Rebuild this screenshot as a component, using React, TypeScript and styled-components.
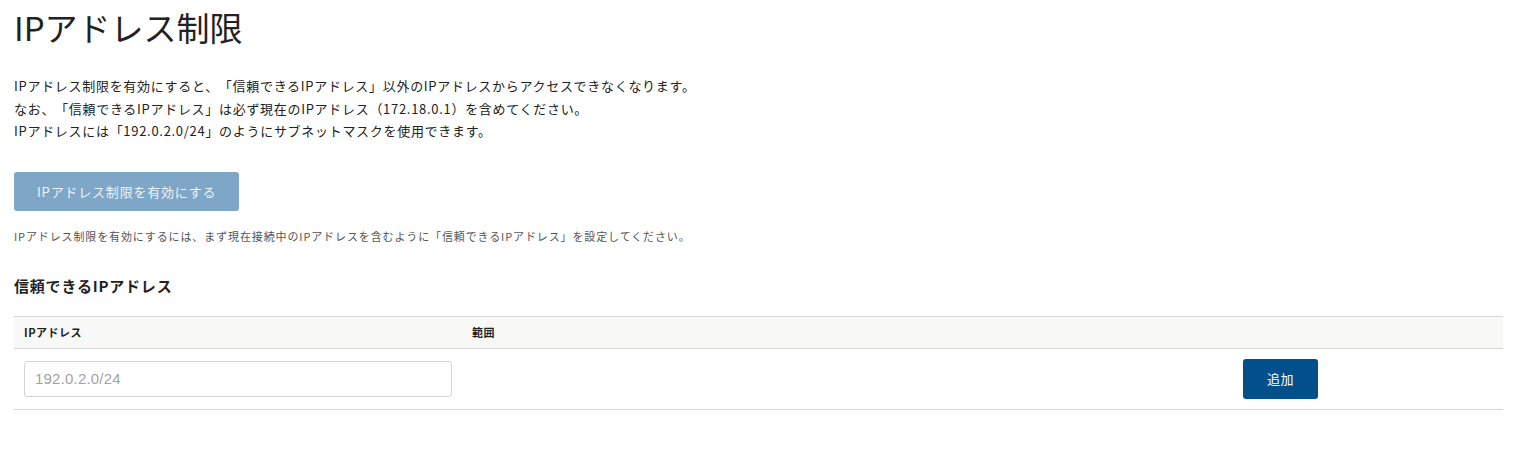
import React from "react";
import styled, { createGlobalStyle } from "styled-components";

const Global = createGlobalStyle`
  html, body { margin: 0; padding: 0; background: #fff; }
  body {
    font-family: "Noto Sans CJK JP", "Noto Sans", sans-serif;
    color: #222;
    text-spacing-trim: space-all;
  }
  * { box-sizing: border-box; }
`;

const Page = styled.div`
  padding: 6px 24px 0 14px;
`;

const Title = styled.h1`
  margin: 0;
  font-size: 33px;
  font-weight: 400;
  line-height: 42px;
  color: #222;
`;

const Lead = styled.p`
  margin: 27px 0 0;
  font-size: 13px;
  letter-spacing: 0.7px;
  line-height: 22.5px;
  color: #222;
`;

const PrimaryButton = styled.button<{ $disabled?: boolean }>`
  display: inline-flex;
  align-items: center;
  justify-content: center;
  height: ${(p) => (p.$disabled ? 39 : 40)}px;
  padding: 0 ${(p) => (p.$disabled ? 23 : 24)}px;
  border: none;
  border-radius: 3px;
  background: ${(p) => (p.$disabled ? "#7ea6c7" : "#02508b")};
  color: ${(p) => (p.$disabled ? "#eef3f8" : "#fff")};
  font-family: inherit;
  font-size: 13px;
  letter-spacing: ${(p) => (p.$disabled ? 0.8 : 0.4)}px;
  text-spacing-trim: space-all;
  cursor: ${(p) => (p.$disabled ? "default" : "pointer")};
`;

const ButtonRow = styled.div`
  margin-top: 29px;
  display: flex;
`;

const Note = styled.p`
  margin: 16px 0 0;
  font-size: 11px;
  letter-spacing: 0.88px;
  line-height: 18px;
  color: #555;
`;

const SectionTitle = styled.h2`
  margin: 29px 0 0;
  font-size: 15px;
  font-weight: 700;
  letter-spacing: 0.8px;
  line-height: 24px;
  color: #222;
`;

const Table = styled.table`
  margin-top: 18px;
  width: 100%;
  border-collapse: collapse;
  table-layout: fixed;
`;

const Th = styled.th<{ $w?: string }>`
  width: ${(p) => p.$w || "auto"};
  height: 32px;
  padding: 0 10px;
  text-align: left;
  font-size: 11px;
  font-weight: 700;
  letter-spacing: 0.5px;
  color: #222;
  background: #f8f8f6;
  border-top: 1px solid #d6d6d6;
  border-bottom: 1px solid #d6d6d6;
`;

const Td = styled.td`
  height: 61px;
  padding: 0 10px;
  vertical-align: middle;
  border-bottom: 1px solid #d6d6d6;
`;

const Input = styled.input`
  display: block;
  width: 100%;
  height: 36px;
  padding: 0 10px;
  border: 1px solid #d4d4d4;
  border-radius: 3px;
  font-family: "Liberation Sans", "Noto Sans CJK JP", sans-serif;
  font-size: 15px;
  letter-spacing: 0.2px;
  color: #222;
  outline: none;
  &::placeholder { color: #a3a3a3; }
`;

export default function App() {
  return (
    <Page>
      <Global />
      <Title>IPアドレス制限</Title>
      <Lead>
        IPアドレス制限を有効にすると、「信頼できるIPアドレス」以外のIPアドレスからアクセスできなくなります。
        <br />
        なお、「信頼できるIPアドレス」は必ず現在のIPアドレス（172.18.0.1）を含めてください。
        <br />
        IPアドレスには「192.0.2.0/24」のようにサブネットマスクを使用できます。
      </Lead>
      <ButtonRow>
        <PrimaryButton $disabled disabled>
          IPアドレス制限を有効にする
        </PrimaryButton>
      </ButtonRow>
      <Note>
        IPアドレス制限を有効にするには、まず現在接続中のIPアドレスを含むように「信頼できるIPアドレス」を設定してください。
      </Note>
      <SectionTitle>信頼できるIPアドレス</SectionTitle>
      <Table>
        <thead>
          <tr>
            <Th $w="448px">IPアドレス</Th>
            <Th $w="771px">範囲</Th>
            <Th />
          </tr>
        </thead>
        <tbody>
          <tr>
            <Td>
              <Input placeholder="192.0.2.0/24" />
            </Td>
            <Td />
            <Td>
              <PrimaryButton>追加</PrimaryButton>
            </Td>
          </tr>
        </tbody>
      </Table>
    </Page>
  );
}
